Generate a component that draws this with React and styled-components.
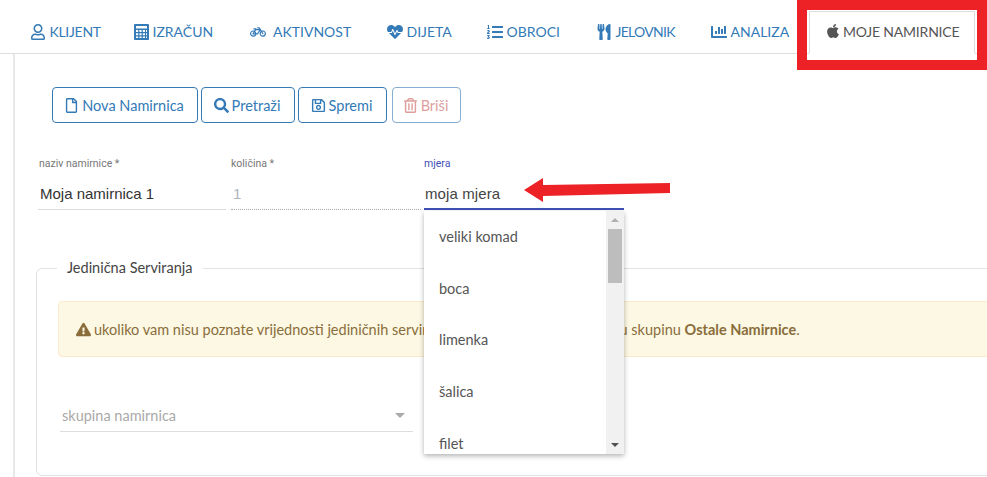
import React from "react";
import styled, { createGlobalStyle } from "styled-components";
import {
  FaRegUser, FaBicycle, FaHeartbeat, FaListOl, FaUtensils,
  FaApple, FaRegFile, FaSearch, FaRegSave, FaRegTrashAlt, FaExclamationTriangle, FaChartBar,
} from "react-icons/fa";

const Global = createGlobalStyle`
  html, body { margin: 0; padding: 0; background: #fff; overflow: hidden; }
  body { font-family: Lato, "Liberation Sans", sans-serif; }
  * { box-sizing: border-box; }
`;

const Page = styled.div`
  position: relative;
  width: 987px;
  height: 477px;
  overflow: hidden;
`;

const Tabs = styled.nav`
  display: flex;
  height: 54px;
  padding: 11px 0 0 13px;
  border-bottom: 1px solid #ddd;
`;

const Tab = styled.a`
  display: flex;
  flex: none;
  align-items: center;
  gap: ${(p) => p.$gap ?? 3.5}px;
  width: ${(p) => p.$w}px;
  height: 43px;
  padding: 0 0 3px ${(p) => (p.$active ? 15 : 16)}px;
  font-size: 14px;
  letter-spacing: ${(p) => p.$ls ?? 0}px;
  white-space: nowrap;
  color: ${(p) => (p.$active ? "#555" : "#337ab7")};
  border: 1px solid ${(p) => (p.$active ? "#ddd" : "transparent")};
  border-bottom: ${(p) => (p.$active ? "1px solid #fff" : "none")};
  background: ${(p) => (p.$active ? "#fff" : "transparent")};
  svg { height: 16px; width: auto; flex: none; }
`;

const Panel = styled.section`
  margin-left: 13px;
  margin-right: -40px;
  height: 423px;
  padding: 33px 0 0 23px;
  border-left: 2px solid #e8e8e8;
`;

const Toolbar = styled.div`
  display: flex;
  margin-left: 14px;
`;

const Button = styled.button`
  display: flex;
  align-items: center;
  justify-content: center;
  gap: 3px;
  height: 36px;
  width: ${(p) => p.$w}px;
  margin-right: ${(p) => p.$mr}px;
  padding: 0 2px 0 0;
  background: #fff;
  border: 1px solid #337ab7;
  border-radius: 4px;
  color: #337ab7;
  font: 14.5px Lato, sans-serif;
  &:disabled { opacity: 0.6; color: #c9605c; border-color: #337ab7; }
  svg { height: 15px; width: auto; }
`;

const Fields = styled.div`
  display: flex;
  margin-top: 34px;
`;

const Field = styled.div`
  width: ${(p) => p.$w}px;
  margin-right: ${(p) => p.$mr}px;
`;

const Label = styled.label`
  display: block;
  height: 22px;
  padding-left: ${(p) => (p.$inset ? 1 : 0)}px;
  font: 10.5px/14px Roboto, sans-serif;
  color: ${(p) => (p.$focus ? "#3f51b5" : "#777")};
`;

const Value = styled.div`
  height: 31px;
  padding: 3px 0 0 ${(p) => (p.$focus ? 1 : 2)}px;
  font: 15px/24px "Liberation Sans", sans-serif;
  letter-spacing: ${(p) => (p.$focus ? "0.1px" : "0")};
  color: ${(p) => (p.$muted ? "#a9b4bc" : p.$focus ? "#444" : "#333")};
  border-bottom: ${(p) =>
    p.$focus ? "2px solid #3f51b5" : p.$dotted ? "1px dotted #aaa" : "1px solid #ddd"};
`;

const Fieldset = styled.fieldset`
  margin: 49px 0 0 -2px;
  padding: 24px 0 0 21px;
  height: 217px;
  border: 1px solid #e2e2e2;
  border-radius: 6px;
`;

const Legend = styled.legend`
  margin-left: -1px;
  padding: 0 10px;
  font-size: 14.5px;
  line-height: 18px;
  color: #444;
`;

const Alert = styled.div`
  display: flex;
  align-items: center;
  gap: 3px;
  height: 56px;
  padding-left: 17px;
  background: #fcf8e3;
  border: 1px solid #faebcc;
  border-radius: 4px;
  color: #8a6d3b;
  font-size: 14.5px;
  white-space: pre;
  svg { height: 15px; width: auto; }
  b { font-weight: 700; }
`;

const SelectBox = styled.div`
  display: flex;
  justify-content: space-between;
  align-items: center;
  width: 353px;
  height: 32px;
  margin: 43px 0 0 2px;
  padding: 0 8px 0 2px;
  border-bottom: 1px solid #ddd;
  font-size: 14.5px;
  color: #a9a9a9;
`;

const Caret = styled.span`
  width: 0;
  height: 0;
  border-left: 5px solid transparent;
  border-right: 5px solid transparent;
  border-top: 5px solid #aaa;
`;

const Menu = styled.div`
  position: absolute;
  left: 424px;
  top: 211px;
  width: 200px;
  height: 243px;
  display: flex;
  background: #fff;
  box-shadow: 0 2px 5px rgba(0, 0, 0, 0.3);
  overflow: hidden;
`;

const Options = styled.ul`
  flex: 1;
  margin: 0;
  padding: 0;
  list-style: none;
`;

const Option = styled.li`
  height: 51.7px;
  padding-left: 15px;
  font-size: 14.5px;
  line-height: 51px;
  color: #555;
`;

const Scrollbar = styled.div`
  position: relative;
  width: 18px;
  background: #f1f1f1;
`;

const Thumb = styled.div`
  position: absolute;
  top: 18px;
  left: 2px;
  width: 14px;
  height: 54px;
  background: #bdbdbd;
`;

const ScrollArrow = styled.span`
  position: absolute;
  left: 5px;
  width: 0;
  height: 0;
  border-left: 4px solid transparent;
  border-right: 4px solid transparent;
  ${(p) =>
    p.$up
      ? "top: 7px; border-bottom: 4px solid #b0b0b0;"
      : "bottom: 7px; border-top: 4px solid #505050;"}
`;

const Highlight = styled.div`
  position: absolute;
  left: 797px;
  top: 0;
  width: 190px;
  height: 70px;
  border: 10px solid #ec2227;
  pointer-events: none;
`;

const Arrow = styled.svg`
  position: absolute;
  left: 524px;
  top: 177px;
`;

const CalculatorIcon = () => (
  <svg viewBox="0 0 15 16" fill="currentColor">
    <path
      fillRule="evenodd"
      d="M1 0h13a1 1 0 0 1 1 1v14a1 1 0 0 1-1 1H1a1 1 0 0 1-1-1V1a1 1 0 0 1 1-1zm1 2v2.5h11V2zm0 4v2h2.2V6zm3.4 0v2h2.2V6zm3.4 0v2H11V6zm3.2 0v2H13V6zM2 9.2v2h2.2v-2zm3.4 0v2h2.2v-2zm3.4 0v2H11v-2zm3.2 0v2H13v-2zM2 12.4V14h2.2v-1.6zm3.4 0V14h2.2v-1.6zm3.4 0V14H11v-1.6zm3.2 0V14H13v-1.6z"
    />
  </svg>
);

const tabs = [
  { Icon: FaRegUser, label: "KLIJENT", w: 104, ls: -0.3 },
  { Icon: CalculatorIcon, label: "IZRAČUN", w: 116 },
  { Icon: FaBicycle, label: "AKTIVNOST", w: 137, gap: 7 },
  { Icon: FaHeartbeat, label: "DIJETA", w: 100 },
  { Icon: FaListOl, label: "OBROCI", w: 109 },
  { Icon: FaUtensils, label: "JELOVNIK", w: 115, ls: -0.7 },
  { Icon: FaChartBar, label: "ANALIZA", w: 115 },
];

export default function App() {
  return (
    <Page>
      <Global />
      <Tabs>
        {tabs.map(({ Icon, label, w, ls, gap }) => (
          <Tab key={label} $w={w} $ls={ls} $gap={gap}>
            <Icon />
            {label}
          </Tab>
        ))}
        <Tab $active $w={166} $gap={2} $ls={-0.2}>
          <FaApple />
          MOJE NAMIRNICE
        </Tab>
      </Tabs>
      <Panel>
        <Toolbar>
          <Button $w={146} $mr={3}><FaRegFile />Nova Namirnica</Button>
          <Button $w={94} $mr={3}><FaSearch />Pretraži</Button>
          <Button $w={89} $mr={5}><FaRegSave />Spremi</Button>
          <Button $w={69} $mr={0} disabled><FaRegTrashAlt />Briši</Button>
        </Toolbar>
        <Fields>
          <Field $w={188} $mr={5}>
            <Label $inset>naziv namirnice *</Label>
            <Value>Moja namirnica 1</Value>
          </Field>
          <Field $w={190} $mr={3}>
            <Label>količina *</Label>
            <Value $muted $dotted>1</Value>
          </Field>
          <Field $w={200} $mr={0}>
            <Label $focus>mjera</Label>
            <Value $focus>moja mjera</Value>
          </Field>
        </Fields>
        <Fieldset>
          <Legend>Jedinična Serviranja</Legend>
          <Alert>
            <FaExclamationTriangle />
            <span>
              {"ukoliko vam nisu poznate vrijednosti jediničnih serviranja, onda namirnicu svrstajte u skupinu "}
              <b>Ostale Namirnice</b>.
            </span>
          </Alert>
          <SelectBox>
            skupina namirnica
            <Caret />
          </SelectBox>
        </Fieldset>
      </Panel>
      <Menu>
        <Options>
          <Option>veliki komad</Option>
          <Option>boca</Option>
          <Option>limenka</Option>
          <Option>šalica</Option>
          <Option>filet</Option>
        </Options>
        <Scrollbar>
          <ScrollArrow $up />
          <Thumb />
          <ScrollArrow />
        </Scrollbar>
      </Menu>
      <Arrow width="148" height="26" viewBox="0 0 148 26">
        <polygon points="0,13 19,1 19,8 146,6 146,16 19,19 19,25" fill="#ec2227" />
      </Arrow>
      <Highlight />
    </Page>
  );
}
